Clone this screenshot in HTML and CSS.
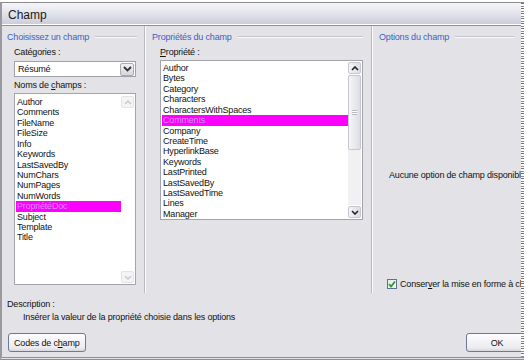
FILE: index.html
```html
<!DOCTYPE html>
<html lang="fr">
<head>
    <meta charset="UTF-8">
    <title>Champ</title>
    <link rel="stylesheet" href="styles.css">
</head>
<body>
    <div class="window">
        <div class="titlebar">Champ</div>

        <div class="dialog">
            <div class="columns">
                <!-- Choisissez un champ -->
                <section class="col col-choose">
                    <div class="group-title"><span>Choisissez un champ</span></div>
                    <div class="inner">
                        <div class="label">Caté<u>g</u>ories :</div>
                        <div class="combo">
                            <span class="combo-value">Résumé</span>
                            <span class="combo-btn">
                                <svg width="9" height="6" viewBox="0 0 9 6"><polyline points="1,1 4.5,4.5 8,1" fill="none" stroke="#333" stroke-width="1.8"/></svg>
                            </span>
                        </div>
                        <div class="label">Noms de <u>c</u>hamps :</div>
                        <div class="listbox list-names">
                            <ul class="items">
                                <li>Author</li>
                                <li>Comments</li>
                                <li>FileName</li>
                                <li>FileSize</li>
                                <li>Info</li>
                                <li>Keywords</li>
                                <li>LastSavedBy</li>
                                <li>NumChars</li>
                                <li>NumPages</li>
                                <li>NumWords</li>
                                <li class="selected">PropriétéDoc</li>
                                <li>Subject</li>
                                <li>Template</li>
                                <li>Title</li>
                            </ul>
                            <div class="scrollbar disabled">
                                <span class="sb-btn">
                                    <svg width="8" height="5" viewBox="0 0 8 5"><polyline points="1,4 4,1 7,4" fill="none" stroke="#c8ccc4" stroke-width="1.5"/></svg>
                                </span>
                                <span class="sb-track"></span>
                                <span class="sb-btn">
                                    <svg width="8" height="5" viewBox="0 0 8 5"><polyline points="1,1 4,4 7,1" fill="none" stroke="#c8ccc4" stroke-width="1.5"/></svg>
                                </span>
                            </div>
                        </div>
                    </div>
                </section>

                <!-- Propriétés du champ -->
                <section class="col col-props">
                    <div class="group-title"><span>Propriétés du champ</span></div>
                    <div class="inner">
                        <div class="label label-prop"><u>P</u>ropriété :</div>
                        <div class="listbox list-props">
                            <ul class="items">
                                <li>Author</li>
                                <li>Bytes</li>
                                <li>Category</li>
                                <li>Characters</li>
                                <li>CharactersWithSpaces</li>
                                <li class="selected">Comments</li>
                                <li>Company</li>
                                <li>CreateTime</li>
                                <li>HyperlinkBase</li>
                                <li>Keywords</li>
                                <li>LastPrinted</li>
                                <li>LastSavedBy</li>
                                <li>LastSavedTime</li>
                                <li>Lines</li>
                                <li>Manager</li>
                            </ul>
                            <div class="scrollbar">
                                <span class="sb-btn">
                                    <svg width="8" height="5" viewBox="0 0 8 5"><polyline points="1,4 4,1 7,4" fill="none" stroke="#222" stroke-width="1.6"/></svg>
                                </span>
                                <span class="sb-track">
                                    <span class="sb-thumb"><span class="grip"></span></span>
                                </span>
                                <span class="sb-btn">
                                    <svg width="8" height="5" viewBox="0 0 8 5"><polyline points="1,1 4,4 7,1" fill="none" stroke="#222" stroke-width="1.6"/></svg>
                                </span>
                            </div>
                        </div>
                    </div>
                </section>

                <!-- Options du champ -->
                <section class="col col-options">
                    <div class="group-title"><span>Options du champ</span></div>
                    <div class="no-options">Aucune option de champ disponible</div>
                    <label class="check-row">
                        <span class="checkbox">
                            <svg width="8" height="8" viewBox="0 0 8 8"><polyline points="1,4 3,6.5 7,1.5" fill="none" stroke="#21a121" stroke-width="1.8"/></svg>
                        </span>
                        <span>Conser<u>v</u>er la mise en forme à chaque mise à jour</span>
                    </label>
                </section>
            </div>

            <div class="description">
                <div>Description :</div>
                <div class="desc-text">Insérer la valeur de la propriété choisie dans les options</div>
            </div>

            <div class="buttons">
                <button class="btn">Codes de c<u>h</u>amp</button>
                <button class="btn btn-ok">OK</button>
            </div>
        </div>
    </div>
</body>
</html>
```

FILE: styles.css
```css
* {
    margin: 0;
    padding: 0;
    box-sizing: border-box;
}

body {
    background: #fff;
    font-family: 'Liberation Sans', Arial, sans-serif;
    font-size: 9px;
    letter-spacing: -0.18px;
    color: #111;
    overflow: hidden;
}

.window {
    position: relative;
    margin-top: 2px;
    width: 524px;
    height: 358px;
    border-top: 1px solid #8a8a8e;
    border-left: 2px solid #9a9a9e;
    border-bottom: 3px double #8e8e92;
    background: #e3e3e7;
    overflow: hidden;
}

/* torn right edge */
.window::after {
    content: "";
    position: absolute;
    top: 0;
    right: 0;
    width: 3px;
    height: 100%;
    background: repeating-linear-gradient(180deg, #707074 0 1px, #fff 1px 3px, #8a8a8e 3px 4px, #fff 4px 5px);
}

.titlebar {
    height: 23px;
    padding: 5px 0 0 6px;
    font-size: 12px;
    letter-spacing: 0;
    color: #1a1a1a;
    background: linear-gradient(#f6f6f9, #e6e7ee 40%, #c9cbd9);
    border-bottom: 1px solid #8e8e94;
    box-shadow: inset 0 -1px 0 #fff;
}

.dialog {
    display: flex;
    flex-direction: column;
}

.columns {
    display: flex;
    height: 267px;
}

.col {
    display: flex;
    flex-direction: column;
    padding-top: 5px;
}

.col-choose {
    width: 143px;
    padding-left: 5px;
    border-right: 1px solid #b9b9be;
}

.col-props {
    width: 227px;
    padding-left: 6px;
    border-left: 1px solid #fbfbfc;
    border-right: 1px solid #b9b9be;
}

.col-options {
    flex: 1;
    padding-left: 6px;
    border-left: 1px solid #fbfbfc;
    overflow: hidden;
}

.group-title {
    display: flex;
    align-items: center;
    gap: 6px;
    height: 11px;
    color: #3b5fc6;
}

.group-title::after {
    content: "";
    flex: 1;
    height: 1px;
    background: #c4c4ca;
    box-shadow: 0 1px 0 #fafafa;
}

.col-choose .group-title {
    width: 130px;
}

.col-props .group-title {
    width: 211px;
}

.col-options .group-title {
    width: 135px;
}

.inner {
    display: flex;
    flex-direction: column;
}

.col-choose .inner {
    padding-left: 7px;
}

.col-props .inner {
    padding-left: 8px;
}

.label {
    height: 11px;
    line-height: 11px;
    margin-top: 5px;
    margin-bottom: 3px;
}

.combo + .label {
    margin-top: 3px;
    margin-bottom: 2px;
}

.label-prop {
    margin-bottom: 2px;
}

.combo {
    display: flex;
    align-items: center;
    width: 122px;
    height: 16px;
    background: #fff;
    border: 1px solid #9fa0a8;
    padding: 1px;
}

.combo-value {
    flex: 1;
    padding-left: 2px;
}

.combo-btn {
    display: flex;
    align-items: center;
    justify-content: center;
    width: 14px;
    height: 13px;
    border: 1px solid #a9abb6;
    border-radius: 2px;
    background: linear-gradient(#f0f0f4, #d6d7de);
}

.listbox {
    display: flex;
    background: #fff;
    border: 1px solid #a3a4ac;
}

.list-names {
    width: 122px;
    height: 192px;
    padding: 2px 1px 1px 1px;
}

.list-props {
    width: 203px;
    height: 160px;
    padding: 1px;
}

.items {
    flex: 1;
    list-style: none;
    padding-top: 1px;
}

.items li {
    height: 10.43px;
    line-height: 10.43px;
    padding-left: 1px;
    white-space: nowrap;
}

.items li.selected {
    background: #ff00ff;
    color: #d98cff;
}

.scrollbar {
    display: flex;
    flex-direction: column;
    width: 13px;
    gap: 1px;
}

.sb-btn {
    display: flex;
    align-items: center;
    justify-content: center;
    height: 12px;
    border: 1px solid #c5c7d0;
    border-radius: 2px;
    background: linear-gradient(90deg, #f4f4f7, #dcdde4);
}

.sb-track {
    flex: 1;
    display: flex;
    flex-direction: column;
    background: #f1f1f3;
}

.sb-thumb {
    display: flex;
    align-items: center;
    justify-content: center;
    height: 75px;
    border: 1px solid #c5c7d0;
    border-radius: 2px;
    background: linear-gradient(90deg, #f6f6f8, #dddee5);
}

.grip {
    width: 5px;
    height: 5px;
    border-top: 1px solid #b4b6c0;
    border-bottom: 1px solid #b4b6c0;
    background: linear-gradient(#fff 0 1px, #b4b6c0 1px 2px, #fff 2px);
}

.scrollbar.disabled .sb-btn {
    border-color: #e2e3e8;
    background: #f4f4f6;
}

.scrollbar.disabled .sb-track {
    background: #fff;
}

.no-options {
    margin-top: 128px;
    padding-left: 10px;
    white-space: nowrap;
    line-height: 11px;
}

.check-row {
    display: flex;
    align-items: center;
    gap: 3px;
    margin-top: 98px;
    padding-left: 8px;
    white-space: nowrap;
}

.checkbox {
    display: flex;
    flex: none;
    align-items: center;
    justify-content: center;
    width: 10px;
    height: 10px;
    border: 1px solid #5a7490;
    background: linear-gradient(135deg, #e6e6ea, #fff);
}

.description {
    padding: 6px 0 0 5px;
    line-height: 11px;
}

.desc-text {
    padding-left: 16px;
    margin-top: 2px;
}

.buttons {
    display: flex;
    justify-content: space-between;
    padding: 10px 0 0 6px;
}

.btn {
    height: 19px;
    padding: 0 5px;
    font-family: 'Liberation Sans', Arial, sans-serif;
    font-size: 9px;
    letter-spacing: -0.18px;
    color: #111;
    border: 1px solid #6d7a96;
    border-radius: 3px;
    background: linear-gradient(#fdfdfe, #ececf0 80%, #d6d6de);
}

.btn-ok {
    width: 62px;
    margin-right: -4px;
}
```
